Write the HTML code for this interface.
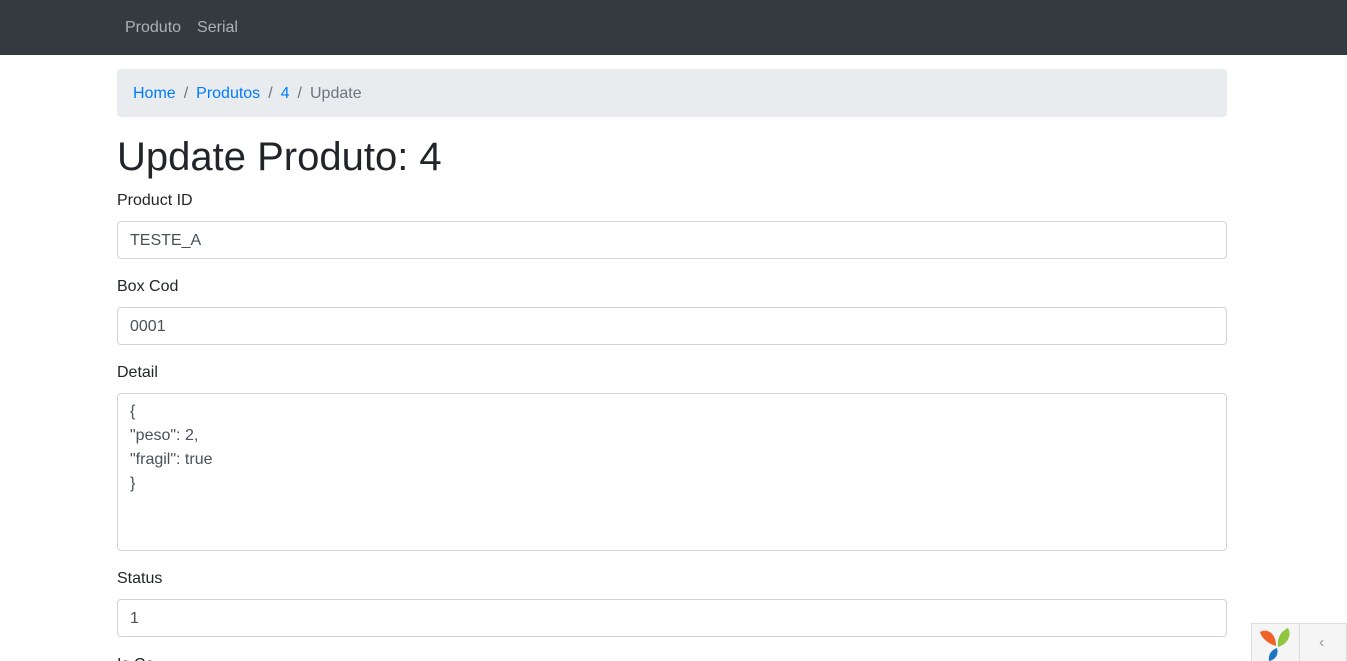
<!DOCTYPE html>
<html><head><meta charset="utf-8"><style>
*{box-sizing:border-box}
html,body{margin:0;height:661px;overflow:hidden}
body{font-family:"Liberation Sans",sans-serif;font-size:16px;color:#212529;background:#fff;position:relative}
nav{height:55px;background:#343a40;padding:0 117px;display:flex;align-items:center}
nav a{color:rgba(255,255,255,.6);text-decoration:none;padding:0 8px;position:relative;top:0}
.c{position:absolute;left:117px;width:1110px}
.bc{top:69px;height:48px;background:#e9ecef;border-radius:4px;padding:1px 16px 0;display:flex;align-items:center}
.bc a{color:#007bff;text-decoration:none}
.bc span{color:#6c757d;margin:0 8px}
h1{margin:0;font-weight:400;font-size:40px;line-height:48px}
.lbl{position:absolute;left:117px;line-height:20px}
.in{position:absolute;left:117px;width:1110px;height:38px;border:1px solid #ced4da;border-radius:4px;padding:1px 12px 0;line-height:36px;color:#495057}
.ta{height:158px;line-height:24px;padding:6px 12px}
.yii{position:absolute;left:1251px;top:623px;width:96px;height:38px;background:#f5f5f5;border:1px solid #ddd;border-bottom:none}
.yii .d{position:absolute;left:47px;top:0;width:1px;height:38px;background:#ddd}
</style></head><body>
<nav><a>Produto</a><a>Serial</a></nav>
<div class="c bc"><a>Home</a><span>/</span><a>Produtos</a><span>/</span><a>4</a><span>/</span><span style="margin:0">Update</span></div>
<h1 class="c" style="top:133px">Update Produto: 4</h1>
<div class="lbl" style="top:191px">Product ID</div>
<div class="in" style="top:221px">TESTE_A</div>
<div class="lbl" style="top:277px">Box Cod</div>
<div class="in" style="top:307px">0001</div>
<div class="lbl" style="top:363px">Detail</div>
<div class="in ta" style="top:393px">{<br>"peso": 2,<br>"fragil": true<br>}</div>
<div class="lbl" style="top:569px">Status</div>
<div class="in" style="top:599px">1</div>
<div class="lbl" style="top:655px">Is Ca</div>
<div class="yii"><svg width="46" height="38" viewBox="0 0 46 38">
<path d="M8 8 C15 4 24 9 24 22 C17 20 10 15 8 8Z" fill="#f0622a"/>
<path d="M36 4 C40 11 36 20 26 23 C25 14 28 8 36 4Z" fill="#8ec63f"/>
<path d="M25 24 C27 31 23 36 17 37 C16 31 19 26 25 24Z" fill="#1d73c2"/>
</svg><div class="d"></div><span style="position:absolute;left:67px;top:10px;color:#999;font-size:16px">‹</span></div>
</body></html>
